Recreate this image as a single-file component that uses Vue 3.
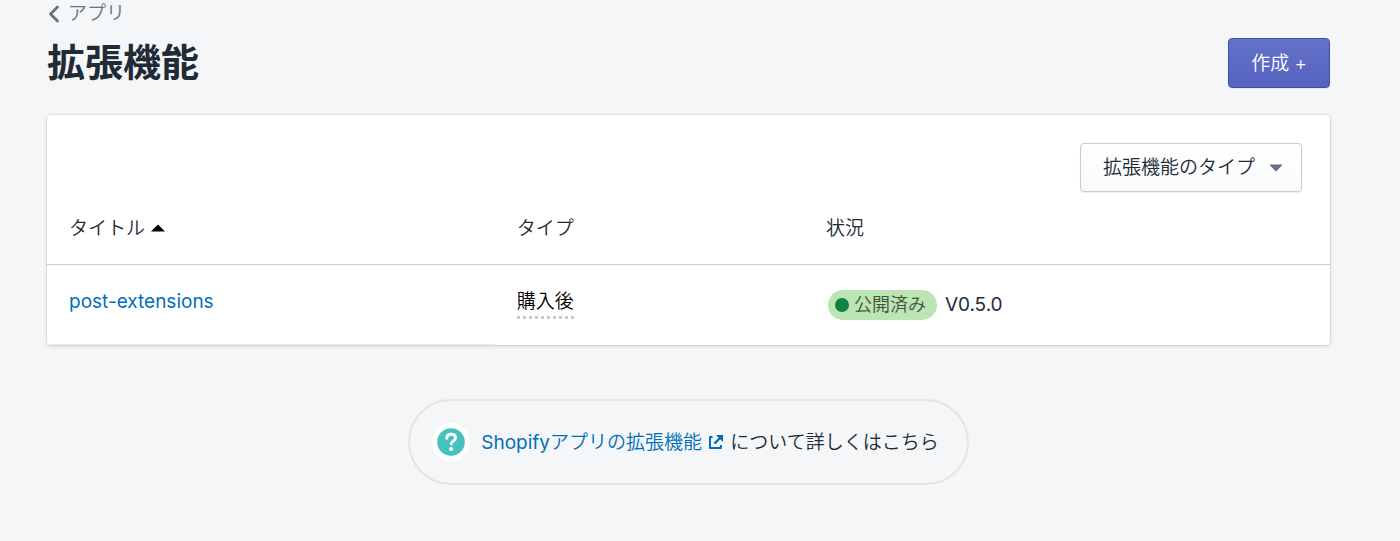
<script setup>
import { ref } from 'vue'

const filter = ref('')
const ascending = ref(true)
const rows = [
  { title: 'post-extensions', type: '購入後', status: '公開済み', version: 'V0.5.0' },
]
</script>

<template>
  <main class="page">
    <nav class="breadcrumb">
      <a href="#" class="back">
        <svg class="chevron" viewBox="0 0 12 18" aria-hidden="true">
          <path d="M9.5 2 2.5 9l7 7" fill="none" stroke="#637381" stroke-width="2.8" stroke-linecap="round" stroke-linejoin="round" />
        </svg>
        <span>アプリ</span>
      </a>
    </nav>

    <header class="header">
      <h1 class="heading">拡張機能</h1>
      <button type="button" class="create">作成 +</button>
    </header>

    <section class="card">
      <div class="filters">
        <div class="picker">
          <select v-model="filter" class="select" aria-label="拡張機能のタイプ">
            <option value="">拡張機能のタイプ</option>
          </select>
          <svg class="caret" viewBox="0 0 14 8" aria-hidden="true">
            <path d="M1.2.5h11.6q.9.1.3.8L7.6 6.9q-.6.5-1.2 0L.9 1.3Q.3.6 1.2.5z" fill="#637381" />
          </svg>
        </div>
      </div>

      <table class="table">
        <colgroup>
          <col class="col-title" />
          <col class="col-type" />
          <col />
        </colgroup>
        <thead>
          <tr>
            <th scope="col" :aria-sort="ascending ? 'ascending' : 'descending'">
              <button type="button" class="sort" @click="ascending = !ascending">
                <span>タイトル</span>
                <svg class="sort-icon" :class="{ flipped: !ascending }" viewBox="0 0 14 8" aria-hidden="true">
                  <path d="M7 .4 14 7.6H0z" fill="#000" />
                </svg>
              </button>
            </th>
            <th scope="col">タイプ</th>
            <th scope="col">状況</th>
          </tr>
        </thead>
        <tbody>
          <tr v-for="row in rows" :key="row.title">
            <td class="title-cell"><a href="#" class="link latin">{{ row.title }}</a></td>
            <td><span class="type">{{ row.type }}</span></td>
            <td>
              <div class="status">
                <span class="badge"><span class="dot"></span>{{ row.status }}</span>
                <span class="latin">{{ row.version }}</span>
              </div>
            </td>
          </tr>
        </tbody>
      </table>
    </section>

    <footer class="help">
      <svg class="help-icon" viewBox="0 0 38 38" aria-hidden="true">
        <circle cx="19" cy="19" r="19" fill="#fff" />
        <circle cx="19" cy="19" r="13.8" fill="#47c1bf" />
        <path d="M14.8 15.2c.1-2.5 1.8-3.9 4.3-3.9 2.6 0 4.4 1.4 4.4 3.6 0 3.3-4.3 3.2-4.3 6.2" fill="none" stroke="#fff" stroke-width="2.9" stroke-linecap="round" />
        <circle cx="19.1" cy="26" r="2.1" fill="#fff" />
      </svg>
      <p class="help-text">
        <a href="#" class="link"><span class="latin">Shopify</span>アプリの拡張機能<svg class="external" viewBox="0 0 14 14" aria-hidden="true">
          <path d="M3.6 1.9H1v11.2h10.9V10" fill="none" stroke="currentColor" stroke-width="2" stroke-linejoin="round" />
          <path d="M5.4 8.6 11 3" fill="none" stroke="currentColor" stroke-width="2.3" />
          <path d="M7 0h7v7l-2.4-2.3L9.3 2.4z" fill="currentColor" />
        </svg></a>
        について詳しくはこちら
      </p>
    </footer>
  </main>
</template>

<style>
html,
body {
  min-height: 100%;
  background: #f4f6f8;
}
</style>

<style scoped>
.page {
  padding: 0 70px 56px 47px;
  color: #212b36;
  font: 350 19px/28px Inter, "Noto Sans CJK JP", sans-serif;
}
.page button,
.page select {
  font: inherit;
}
.latin {
  font-weight: 400;
}
.breadcrumb {
  display: flex;
}
.back {
  display: inline-flex;
  align-items: center;
  gap: 8px;
  margin-left: 1px;
  color: #637381;
  text-decoration: none;
}
.chevron {
  width: 12px;
  height: 18px;
}
.header {
  display: flex;
  align-items: center;
  justify-content: space-between;
  margin: 10px 0 27px;
}
.heading {
  margin: 0 0 2px;
  font-size: 38px;
  line-height: 48px;
  font-weight: 700;
}
.create {
  height: 50px;
  padding: 1px 22px 0;
  color: #fff;
  background: linear-gradient(#6371c7, #5563c1);
  border: 1px solid #3f4eae;
  border-radius: 4px;
  box-shadow: inset 0 1px 0 #6774c8, 0 1px 0 rgba(22, 29, 37, 0.05);
}
.card {
  background: #fff;
  border-radius: 4px;
  box-shadow: 0 0 0 1px rgba(63, 63, 68, 0.07), 0 1px 4px rgba(63, 63, 68, 0.2);
}
.filters {
  display: flex;
  justify-content: flex-end;
  padding: 28px 28px 0;
}
.picker {
  display: grid;
  align-items: center;
}
.select {
  grid-area: 1 / 1;
  height: 49px;
  padding: 0 45px 0 22px;
  appearance: none;
  color: #212b36;
  background: linear-gradient(#fff, #f9fafb);
  border: 1px solid #c4cdd5;
  border-radius: 4px;
  box-shadow: 0 1px 1px rgba(22, 29, 37, 0.08);
}
.caret {
  grid-area: 1 / 1;
  justify-self: end;
  width: 14px;
  height: 8px;
  margin-right: 19px;
  pointer-events: none;
}
.table {
  width: 100%;
  table-layout: fixed;
  border-collapse: separate;
  border-spacing: 0;
}
.col-title {
  width: 34.9%;
}
.col-type {
  width: 24.1%;
}
th {
  padding: 23px 22px 21px;
  font-weight: inherit;
  text-align: left;
  border-bottom: 1px solid #c4cdd5;
}
td {
  height: 80px;
  padding: 23px 22px 21px;
  box-sizing: border-box;
  vertical-align: top;
}
.title-cell {
  box-shadow: inset 0 -1px 0 #ebeced;
}
.sort {
  display: flex;
  align-items: center;
  gap: 6px;
  padding: 0;
  color: inherit;
  background: none;
  border: 0;
}
.sort-icon {
  width: 14px;
  height: 8px;
  margin-bottom: 2px;
}
.flipped {
  transform: rotate(180deg);
}
.link {
  color: #006fbb;
  text-decoration: none;
}
.type {
  display: inline-block;
  color: #000;
  border-bottom: 3px dotted #c4cdd5;
}
.status {
  display: flex;
  align-items: center;
  gap: 8px;
  padding: 2px;
}
.badge {
  display: flex;
  align-items: center;
  gap: 5px;
  height: 30px;
  padding: 0 11px 0 7px;
  color: #414f3e;
  font-size: 18px;
  background: #bbe5b3;
  border-radius: 15px;
}
.dot {
  width: 14px;
  height: 14px;
  background: #108043;
  border-radius: 50%;
}
.help {
  display: flex;
  align-items: center;
  gap: 11px;
  width: fit-content;
  margin: 54px auto 0;
  padding: 22px 28px 22px 22px;
  border: 2px solid #e2e4e6;
  border-radius: 43px;
}
.help-icon {
  width: 38px;
  height: 38px;
}
.help-text {
  margin: 2px 0 0;
}
.external {
  width: 14px;
  height: 14px;
  margin: 0 2px 0 7px;
}
</style>
